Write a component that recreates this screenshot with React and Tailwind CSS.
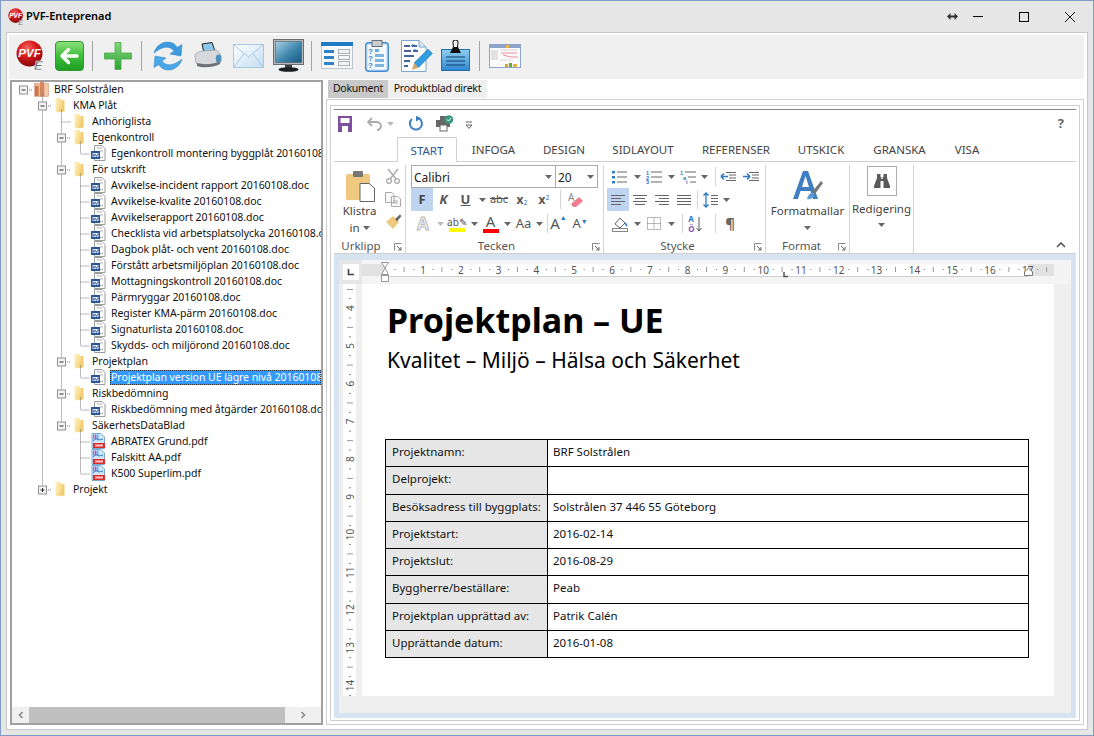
import React from "react";

const Ball = ({ s = 32, id = "b" }) => (
  <svg width={s} height={s} viewBox="0 0 32 32" className="shrink-0">
    <defs>
      <radialGradient id={id} cx="0.42" cy="0.3" r="0.75">
        <stop offset="0" stopColor="#f46a5e" />
        <stop offset="0.45" stopColor="#d81a1e" />
        <stop offset="1" stopColor="#7c0508" />
      </radialGradient>
    </defs>
    <circle cx="13.5" cy="13.5" r="13" fill={`url(#${id})`} />
    <text x="13.5" y="17" textAnchor="middle" fontFamily="'Liberation Sans',sans-serif" fontWeight="700" fontStyle="italic" fontSize="11.5" fill="#fff">PVF</text>
    <text x="18" y="29.5" fontFamily="'Liberation Sans',sans-serif" fontWeight="700" fontStyle="italic" fontSize="13" fill="#6f6f6f" stroke="#fff" strokeWidth="0.4">E</text>
  </svg>
);

const Back = () => (
  <svg width="29" height="30" viewBox="0 0 29 30" className="shrink-0">
    <defs>
      <linearGradient id="gb" x1="0" y1="0" x2="0" y2="1">
        <stop offset="0" stopColor="#8fe07f" />
        <stop offset="0.5" stopColor="#3fbf3a" />
        <stop offset="1" stopColor="#1d9d22" />
      </linearGradient>
    </defs>
    <rect x="0.5" y="0.5" width="28" height="29" rx="3.5" fill="url(#gb)" stroke="#2a9a2b" />
    <path d="M7 15 L13.5 8.5 M7 15 L13.5 21.5 M7 15 H22" stroke="#fff" strokeWidth="3.4" fill="none" strokeLinecap="round" />
  </svg>
);

const Plus = () => (
  <svg width="28" height="28" viewBox="0 0 28 28" className="shrink-0">
    <defs>
      <linearGradient id="gp" x1="0" y1="0" x2="0" y2="1">
        <stop offset="0" stopColor="#86d67e" />
        <stop offset="1" stopColor="#2ea334" />
      </linearGradient>
    </defs>
    <path d="M11 0.5 H17 V11 H27.5 V17 H17 V27.5 H11 V17 H0.5 V11 H11 Z" fill="url(#gp)" stroke="#48ab4a" strokeWidth="0.8" />
  </svg>
);

const Refresh = () => (
  <svg width="30" height="32" viewBox="0 0 30 32" className="shrink-0">
    <path d="M1 13 C3 5 11 0.5 18 2.5 C21 3.5 23 5 24 7.5 L29 4.5 L28 16 L17 14 L21 11 C19 8 15 6.5 11 7.5 C7 8.5 4 10.5 1 13 Z" fill="#3d9be0" stroke="#2a7fc5" strokeWidth="0.5" />
    <path d="M29 19 C27 27 19 31.5 12 29.5 C9 28.5 7 27 6 24.5 L1 27.5 L2 16 L13 18 L9 21 C11 24 15 25.5 19 24.5 C23 23.5 26 21.5 29 19 Z" fill="#4aa8e8" stroke="#2a7fc5" strokeWidth="0.5" />
  </svg>
);

const Printer = () => (
  <svg width="29" height="28" viewBox="0 0 29 28" className="shrink-0">
    <path d="M9 2 L19 0.5 L22 9 L11 11 Z" fill="#8cc8ee" stroke="#222" strokeWidth="1" />
    <path d="M2 14 C2 11 6 9.5 10 9 L22 8 C25 8 27 11 28 14 L28 20 C24 23 8 24 3 21 Z" fill="#d6d8dc" stroke="#8f9298" strokeWidth="0.6" />
    <path d="M4 21 C10 23 21 22.5 27 19 L27 22 C20 26 9 26 4 24 Z" fill="#6e7278" />
    <ellipse cx="25.5" cy="16.5" rx="2.8" ry="4" fill="#4f8fc0" />
  </svg>
);

const Mail = () => (
  <svg width="31" height="24" viewBox="0 0 31 24" className="shrink-0">
    <defs>
      <linearGradient id="gm" x1="0" y1="0" x2="1" y2="1">
        <stop offset="0" stopColor="#ffffff" />
        <stop offset="1" stopColor="#c4ddf2" />
      </linearGradient>
    </defs>
    <rect x="0.5" y="0.5" width="30" height="23" fill="url(#gm)" stroke="#a8c8e4" />
    <path d="M1 1 L15.5 13 L30 1 M1 23 L11 9.5 M30 23 L20 9.5" fill="none" stroke="#a8c8e4" />
  </svg>
);

const Monitor = () => (
  <svg width="31" height="33" viewBox="0 0 31 33" className="shrink-0">
    <defs>
      <linearGradient id="gs" x1="0" y1="0" x2="1" y2="1">
        <stop offset="0" stopColor="#a8cfe4" />
        <stop offset="0.55" stopColor="#3f87ad" />
        <stop offset="1" stopColor="#16597f" />
      </linearGradient>
    </defs>
    <rect x="0.5" y="0.5" width="30" height="25" fill="#b6b9bc" stroke="#6a6e73" />
    <rect x="2.5" y="2.5" width="26" height="21" fill="url(#gs)" stroke="#4a5055" strokeWidth="0.5" />
    <rect x="12" y="26" width="7" height="3" fill="#3a3d40" />
    <ellipse cx="15.5" cy="30.5" rx="10" ry="2.3" fill="#1d1e20" />
  </svg>
);

const ListForm = () => (
  <svg width="32" height="27" viewBox="0 0 32 27" className="shrink-0">
    <rect x="0.5" y="0.5" width="31" height="26" fill="#f7f9fb" stroke="#bcc4cc" />
    <rect x="0" y="0" width="32" height="4" fill="#1f7cc4" />
    <rect x="3" y="8" width="10" height="3" fill="#2b82c7" />
    <rect x="3" y="14" width="10" height="3" fill="#2b82c7" />
    <rect x="3" y="20" width="10" height="3" fill="#2b82c7" />
    <rect x="17.5" y="7.5" width="11" height="4" fill="#f0f2f4" stroke="#a9b0b6" />
    <rect x="17.5" y="13.5" width="11" height="4" fill="#f0f2f4" stroke="#a9b0b6" />
    <rect x="17.5" y="19.5" width="11" height="4" fill="#f0f2f4" stroke="#a9b0b6" />
  </svg>
);

const Clip = () => (
  <svg width="24" height="32" viewBox="0 0 24 32" className="shrink-0">
    <rect x="0.7" y="2.7" width="22.6" height="28.6" rx="3" fill="#d4e6f7" stroke="#3e8ad0" strokeWidth="1.4" />
    <rect x="3" y="5" width="18" height="24" fill="#f5f9fd" />
    <rect x="7" y="0.5" width="10" height="6" fill="#c9ccd0" stroke="#6c7075" />
    <text x="3" y="14" fontFamily="'Liberation Sans',sans-serif" fontWeight="700" fontSize="8" fill="#2e86d0">?</text>
    <text x="3" y="21" fontFamily="'Liberation Sans',sans-serif" fontWeight="700" fontSize="8" fill="#2e86d0">?</text>
    <text x="3" y="28" fontFamily="'Liberation Sans',sans-serif" fontWeight="700" fontSize="8" fill="#2e86d0">?</text>
    <rect x="10" y="9" width="4" height="3" fill="#6ea9da" />
    <rect x="10" y="14" width="9" height="3" fill="#7fb4df" />
    <rect x="10" y="19" width="9" height="3" fill="#7fb4df" />
    <rect x="10" y="24" width="9" height="3" fill="#7fb4df" />
  </svg>
);

const EditDoc = () => (
  <svg width="32" height="32" viewBox="0 0 32 32" className="shrink-0">
    <path d="M0.5 0.5 H18 L25 7 V31.5 H0.5 Z" fill="#fff" stroke="#7aa6cf" />
    <path d="M18 0.5 V7 H25" fill="#d7e6f4" stroke="#7aa6cf" />
    <path d="M3 6 H9 M11 6 H16 M3 11 H10 M12 11 H17 M3 16 H13 M3 21 H9 M3 26 H7" stroke="#0b2f7a" strokeWidth="1.5" />
    <path d="M10 6 L12 4.5 L14 6 M12 11 L14 9.5 L16 11" stroke="#2d72d8" fill="none" />
    <path d="M13 23 L27 9 L31.5 13.5 L17.5 27.5 Z" fill="#2f9de0" stroke="#1d78b8" strokeWidth="0.5" />
    <path d="M13 23 L17.5 27.5 L11 30 Z" fill="#d9a463" />
  </svg>
);

const Clipped = () => (
  <svg width="29" height="32" viewBox="0 0 29 32" className="shrink-0">
    <defs>
      <linearGradient id="gc" x1="0" y1="0" x2="0" y2="1">
        <stop offset="0" stopColor="#8fd0f2" />
        <stop offset="1" stopColor="#2f86cf" />
      </linearGradient>
    </defs>
    <rect x="0.5" y="9.5" width="28" height="21" fill="url(#gc)" stroke="#1f6fb0" />
    <path d="M5 17 H24 M5 21 H24 M5 25 H24" stroke="#12406b" strokeWidth="1.1" />
    <path d="M9 13 L12 7 H17 L20 13 Z" fill="#111" />
    <path d="M12.5 7 L12 2.5 A2.5 2.5 0 0 1 17 2.5 L16.5 7" fill="none" stroke="#222" strokeWidth="1.1" />
  </svg>
);

const Shot = () => (
  <svg width="32" height="24" viewBox="0 0 32 24" className="shrink-0">
    <rect x="0.5" y="0.5" width="31" height="23" fill="#fafafa" stroke="#8ea3c9" />
    <rect x="1" y="1" width="30" height="3" fill="#8ea3c9" />
    <rect x="17" y="1" width="3" height="3" fill="#e6b54a" />
    <rect x="2" y="6" width="7" height="10" fill="#e2e2e2" />
    <path d="M12 9 H28 M14 11 L22 13 H29" stroke="#ee8f9c" strokeWidth="1.2" fill="none" />
    <path d="M11 6 H28 M11 16 H24" stroke="#d8d8d8" />
    <rect x="16" y="20" width="3" height="3" fill="#e0a020" />
    <rect x="20" y="19" width="3" height="4" fill="#6fa830" />
    <rect x="24" y="20" width="4" height="3" fill="#e8b040" />
  </svg>
);

const Sep = ({ ml }) => <div className={`w-px h-[30px] bg-[#a3a3a3] shrink-0 ${ml}`} />;

const Folder = () => (
  <svg width="10" height="16" viewBox="0 0 10 16" className="shrink-0">
    <defs>
      <linearGradient id="gf" x1="0" y1="0" x2="1" y2="0.4">
        <stop offset="0" stopColor="#fff3c4" />
        <stop offset="0.6" stopColor="#f7dc90" />
        <stop offset="1" stopColor="#eec76a" />
      </linearGradient>
    </defs>
    <path d="M0.5 1 H5 L6 3 H9.5 V14.5 L3 15.5 L0.5 14 Z" fill="url(#gf)" />
  </svg>
);

const DocI = () => (
  <svg width="15" height="16" viewBox="0 0 15 16" className="shrink-0">
    <path d="M3.5 0.5 H11 L14 3.5 V15.5 H3.5 Z" fill="#fff" stroke="#9a9a9a" />
    <path d="M6 3 H11 M9 6 H12 M9 12.5 H12" stroke="#b0b0b0" />
    <rect x="0" y="6" width="9" height="8" fill="#2b579a" />
    <rect x="1.5" y="8" width="6" height="4" fill="#e8eef7" />
    <path d="M2 8.5 L3 11.5 L4.3 9 L5.5 11.5 L7 8.5" stroke="#2b579a" strokeWidth="0.8" fill="none" />
  </svg>
);

const PdfI = () => (
  <svg width="15" height="16" viewBox="0 0 15 16" className="shrink-0">
    <path d="M1 0.5 H10 L13.5 4 V15.5 H1 Z" fill="#cfe6f8" stroke="#7ca9cf" />
    <rect x="2" y="1.5" width="1.5" height="5" fill="#d65cc0" />
    <rect x="4" y="1.5" width="1.5" height="5" fill="#6a7be0" />
    <rect x="6" y="1.5" width="1.5" height="5" fill="#58b8e8" />
    <path d="M2 8 L5 5.5 L8 7 L12 6" stroke="#3a7fc0" fill="none" />
    <rect x="2" y="10" width="12" height="5" fill="#e02b2b" />
    <rect x="4" y="11.5" width="8" height="2" fill="#f4c8c8" />
  </svg>
);

const BrfI = () => (
  <svg width="15" height="16" viewBox="0 0 15 16" className="shrink-0">
    <rect x="0.5" y="2.5" width="14" height="13" fill="#e9b79a" stroke="#c98f70" strokeWidth="0.5" />
    <rect x="1" y="5" width="3.5" height="10" fill="#c9764a" />
    <rect x="6" y="0.5" width="4" height="15" fill="#d9865a" />
    <rect x="11" y="3" width="3" height="12" fill="#f0caa9" />
  </svg>
);

const treeRows = [
  [54, "brf", "BRF Solstrålen"],
  [73, "f", "KMA Plåt"],
  [92, "f", "Anhöriglista"],
  [92, "f", "Egenkontroll"],
  [111, "d", "Egenkontroll montering byggplåt 20160108.doc"],
  [92, "f", "För utskrift"],
  [111, "d", "Avvikelse-incident rapport 20160108.doc"],
  [111, "d", "Avvikelse-kvalite 20160108.doc"],
  [111, "d", "Avvikelserapport 20160108.doc"],
  [111, "d", "Checklista vid arbetsplatsolycka 20160108.doc"],
  [111, "d", "Dagbok plåt- och vent 20160108.doc"],
  [111, "d", "Förstått arbetsmiljöplan 20160108.doc"],
  [111, "d", "Mottagningskontroll 20160108.doc"],
  [111, "d", "Pärmryggar 20160108.doc"],
  [111, "d", "Register KMA-pärm 20160108.doc"],
  [111, "d", "Signaturlista 20160108.doc"],
  [111, "d", "Skydds- och miljörond 20160108.doc"],
  [92, "f", "Projektplan"],
  [111, "d", "Projektplan version UE lägre nivå 20160108.doc", true],
  [92, "f", "Riskbedömning"],
  [111, "d", "Riskbedömning med åtgärder 20160108.doc"],
  [92, "f", "SäkerhetsDataBlad"],
  [111, "p", "ABRATEX Grund.pdf"],
  [111, "p", "Falskitt AA.pdf"],
  [111, "p", "K500 Superlim.pdf"],
  [73, "f", "Projekt"],
];

const rowY = (n) => 7.5 + 16 * n;

const Exp = ({ x, y, plus }) => (
  <g>
    <rect x={x - 4} y={y - 4} width="8" height="8" fill="#f4f4f4" stroke="#8f8f8f" />
    <path d={`M${x - 2} ${y} H${x + 2}`} stroke="#333" />
    {plus && <path d={`M${x} ${y - 2} V${y + 2}`} stroke="#333" />}
  </g>
);

const TreeLines = () => {
  const hs = [
    [61.5, 71, 2], [65, 71, 3], [80.5, 90, 4], [65, 71, 5],
    ...[6, 7, 8, 9, 10, 11, 12, 13, 14, 15, 16].map((n) => [80.5, 90, n]),
    [65, 71, 17], [80.5, 90, 18], [65, 71, 19], [80.5, 90, 20], [65, 71, 21],
    [80.5, 90, 22], [80.5, 90, 23], [80.5, 90, 24], [46, 52, 25],
  ];
  return (
    <svg className="absolute left-0 top-0 pointer-events-none" width="100" height="500">
      <g stroke="#777" strokeDasharray="1 1" fill="none">
        <path d={`M30.5 ${rowY(0) + 4} V${rowY(1)}`} />
        <path d={`M30.5 ${rowY(1)} V${rowY(25) - 4}`} />
        <path d={`M49.5 ${rowY(1) + 4} V${rowY(21) - 4}`} />
        <path d={`M68.5 ${rowY(3) + 4} V${rowY(4)}`} />
        <path d={`M68.5 ${rowY(5) + 4} V${rowY(16)}`} />
        <path d={`M68.5 ${rowY(17) + 4} V${rowY(18)}`} />
        <path d={`M68.5 ${rowY(19) + 4} V${rowY(20)}`} />
        <path d={`M68.5 ${rowY(21) + 4} V${rowY(24)}`} />
        <path d={`M15 ${rowY(0) + 0.5} H21`} />
        <path d={`M34 ${rowY(1) + 0.5} H40`} />
        {hs.map(([a, b, n], i) => (
          <path key={i} d={`M${a - 12} ${rowY(n) + 0.5} H${b - 12}`} />
        ))}
      </g>
      <Exp x={11.5} y={rowY(0) + 0.5} />
      <Exp x={30.5} y={rowY(1) + 0.5} />
      <Exp x={49.5} y={rowY(3) + 0.5} />
      <Exp x={49.5} y={rowY(5) + 0.5} />
      <Exp x={49.5} y={rowY(17) + 0.5} />
      <Exp x={49.5} y={rowY(19) + 0.5} />
      <Exp x={49.5} y={rowY(21) + 0.5} />
      <Exp x={30.5} y={rowY(25) + 0.5} plus />
    </svg>
  );
};

const Tree = () => (
  <div className="w-[313px] h-[645px] border-2 border-[#a0a0a0] bg-white flex flex-col shrink-0 font-['Noto_Sans',sans-serif] text-[10.5px] tracking-[-0.05px] text-[#111]">
    <div className="relative flex-1 overflow-hidden">
      <TreeLines />
      <div className="-mt-[1px]">
        {treeRows.map(([tx, k, t, sel], i) => {
          const icx = k === "f" ? tx - 18 : tx - 20;
          return (
            <div key={i} className="h-[16px] flex items-center whitespace-nowrap" style={{ paddingLeft: icx - 12 }}>
              {k === "f" && <Folder />}
              {k === "d" && <DocI />}
              {k === "p" && <PdfI />}
              {k === "brf" && <BrfI />}
              <span
                className={`block leading-[15px] ${sel ? "bg-[#3399ff] text-white outline-1 outline-dotted outline-[#333] -outline-offset-1 pl-px pr-4 flex-1 overflow-hidden" : ""}`}
                style={{ marginLeft: k === "f" ? 8 : sel ? 4 : 5 }}
              >
                {t}
              </span>
            </div>
          );
        })}
      </div>
    </div>
    <div className="h-[16px] bg-[#f0f0f0] flex items-center shrink-0">
      <div className="w-[17px] flex justify-center">
        <svg width="6" height="8" viewBox="0 0 6 8"><path d="M4.5 1 L1.5 4 L4.5 7" stroke="#888" strokeWidth="1.6" fill="none" /></svg>
      </div>
      <div className="w-[256px] h-[16px] bg-[#c0c0c0]" />
      <div className="flex-1 flex justify-center">
        <svg width="6" height="8" viewBox="0 0 6 8"><path d="M1.5 1 L4.5 4 L1.5 7" stroke="#888" strokeWidth="1.6" fill="none" /></svg>
      </div>
    </div>
  </div>
);

const Caret = ({ c = "#666" }) => (
  <svg width="7" height="4" viewBox="0 0 7 4" className="shrink-0"><path d="M0 0 H7 L3.5 4 Z" fill={c} /></svg>
);

const Cell = ({ w, bg, children }) => (
  <div className={`h-full flex items-center justify-center shrink-0 ${bg || ""}`} style={{ width: w }}>{children}</div>
);

const Lines = ({ d, w = 16, h = 12, c = "#666" }) => (
  <svg width={w} height={h} viewBox={`0 0 ${w} ${h}`} className="shrink-0"><path d={d} stroke={c} fill="none" /></svg>
);

const VSep = () => <div className="w-px h-[19px] bg-[#d5d5d5] shrink-0 self-center" />;

const Launcher = () => (
  <svg width="8" height="8" viewBox="0 0 8 8" className="absolute right-[3px] top-[6px]">
    <path d="M0.5 7.5 V0.5 H7.5" stroke="#8a8a8a" fill="none" />
    <path d="M3 3 L7 7 M7 4 V7 H4" stroke="#666" fill="none" />
  </svg>
);

const GroupLabel = ({ children, launcher, pr }) => (
  <div className={`relative h-[16px] leading-[18px] text-center text-[#555] text-[11.5px] ${pr || ""}`}>
    {children}
    {launcher && <Launcher />}
  </div>
);

const Urklipp = () => (
  <div className="w-[72px] h-[88px] flex flex-col border-r border-[#d5d5d5] shrink-0">
    <div className="flex-1 flex">
      <div className="w-[49px] flex flex-col items-center">
        <svg width="30" height="32" viewBox="0 0 30 32" className="mt-[5px] ml-[5px] shrink-0">
          <rect x="0" y="4" width="24" height="26" rx="1.5" fill="#efc97f" />
          <rect x="7" y="1" width="10" height="6" rx="1" fill="#777" />
          <path d="M14 13.5 H23 L28.5 18 V31.5 H14 Z" fill="#fff" stroke="#666" />
        </svg>
        <div className="mt-[1px] ml-[2px] leading-[16px] text-[#444] text-[11.5px] text-center">Klistra</div>
        <div className="mt-[1px] ml-[2px] flex items-center gap-[3px] leading-[16px] text-[#444] text-[11.5px]">in <Caret /></div>
      </div>
      <div className="flex flex-col items-center w-[20px]">
        <svg width="16" height="16" viewBox="0 0 16 16" className="mt-[3px] shrink-0">
          <path d="M3 1 L11 11 M13 1 L5 11" stroke="#aaa" strokeWidth="1.4" />
          <circle cx="4" cy="13" r="2.4" fill="none" stroke="#aaa" strokeWidth="1.3" />
          <circle cx="12" cy="13" r="2.4" fill="none" stroke="#aaa" strokeWidth="1.3" />
        </svg>
        <svg width="16" height="15" viewBox="0 0 16 15" className="mt-[8px] shrink-0">
          <path d="M0.5 0.5 H7 L9 2.5 V10.5 H0.5 Z M6.5 4.5 H13 L15.5 7 V14.5 H6.5 Z" fill="#f8f8f8" stroke="#aaa" />
          <path d="M8 9 H13 M8 11 H13" stroke="#aaa" />
        </svg>
        <svg width="17" height="16" viewBox="0 0 17 16" className="mt-[7px] shrink-0">
          <path d="M1 8 L8 2 L14 8 L8 15 Z" fill="#efc97f" />
          <path d="M10 5 L15 0.5 L16.5 2 L12 7.5 Z" fill="#666" />
        </svg>
      </div>
    </div>
    <GroupLabel launcher pr="pr-[17px]">Urklipp</GroupLabel>
  </div>
);

const AIcon = ({ bar, c = "#555" }) => (
  <div className="flex flex-col items-center leading-none">
    <span className="text-[15px] leading-[13px]" style={{ color: c }}>A</span>
    {bar && <span className="w-[16px] h-[4px] mt-[1px]" style={{ background: bar }} />}
  </div>
);

const Combo = ({ w, t }) => (
  <div className="h-[23px] flex items-center justify-between pl-[2px] pr-[3px] bg-white border border-[#ababab] -mr-px" style={{ width: w }}>
    <span className="text-[#222] text-[12px] leading-[15px] pt-[1px]">{t}</span>
    <Caret />
  </div>
);

const Tecken = () => (
  <div className="w-[198px] h-[88px] flex flex-col border-r border-[#d5d5d5] shrink-0">
    <div className="flex-1 pl-[5px]">
      <div className="flex"><Combo w={145} t="Calibri" /><Combo w={43} t="20" /></div>
      <div className="flex h-[23px] items-center">
        <Cell w={22} bg="bg-[#bfd4f0]"><span className="font-bold text-[13px] text-[#444]">F</span></Cell>
        <Cell w={21}><span className="font-bold italic text-[13px] text-[#555]">K</span></Cell>
        <Cell w={23}><span className="font-bold underline text-[13px] text-[#555]">U</span></Cell>
        <Cell w={10}><Caret /></Cell>
        <Cell w={24}><span className="line-through text-[11px] text-[#555]">abc</span></Cell>
        <Cell w={22}><span className="font-bold text-[12px] text-[#555]">x<sub className="text-[7px] text-[#2b79c2] font-normal">2</sub></span></Cell>
        <Cell w={22}><span className="font-bold text-[12px] text-[#555]">x<sup className="text-[7px] text-[#2b79c2] font-normal">2</sup></span></Cell>
        <Cell w={5} />
        <VSep />
        <Cell w={30}>
          <svg width="16" height="16" viewBox="0 0 16 16">
            <path d="M3 12 L11 5 L15 9 L8 15 H5 Z" fill="#f07d8e" />
            <text x="0" y="9" fontSize="10" fill="#888" fontFamily="'Noto Sans',sans-serif">A</text>
          </svg>
        </Cell>
      </div>
      <div className="flex h-[25px] items-center">
        <Cell w={24}><span className="text-[17px] font-bold text-[#f0f0f0] [-webkit-text-stroke:1px_#bdbdbd]">A</span></Cell>
        <Cell w={10}><Caret c="#bbb" /></Cell>
        <Cell w={24}>
          <div className="flex flex-col items-center">
            <span className="text-[10px] leading-[12px] text-[#555]">ab✎</span>
            <span className="w-[16px] h-[4px] bg-[#ffff00]" />
          </div>
        </Cell>
        <Cell w={10}><Caret /></Cell>
        <Cell w={23}><AIcon bar="#ff0000" /></Cell>
        <Cell w={10}><Caret /></Cell>
        <Cell w={23}><span className="text-[13px] text-[#555]">Aa</span></Cell>
        <Cell w={8}><Caret /></Cell>
        <Cell w={4} />
        <VSep />
        <Cell w={21}><span className="text-[15px] text-[#555]">A<sup className="text-[7px] text-[#2b79c2] align-super">▲</sup></span></Cell>
        <Cell w={22}><span className="text-[13px] text-[#555]">A<sup className="text-[7px] text-[#2b79c2]">▼</sup></span></Cell>
      </div>
    </div>
    <GroupLabel launcher pr="pr-[16px]">Tecken</GroupLabel>
  </div>
);

const bl = "#2b79c2";
const BulletIcon = () => (
  <svg width="15" height="14" viewBox="0 0 15 14" className="shrink-0">
    <rect x="0" y="1" width="3" height="2.4" fill={bl} /><rect x="0" y="6" width="3" height="2.4" fill={bl} /><rect x="0" y="11" width="3" height="2.4" fill={bl} />
    <path d="M5 2 H15 M5 7 H15 M5 12 H15" stroke="#666" />
  </svg>
);
const NumIcon = ({ multi }) => (
  <svg width="16" height="14" viewBox="0 0 16 14" className="shrink-0">
    <text x="0" y="4.5" fontSize="5.5" fontWeight="700" fill={bl} fontFamily="'Liberation Sans',sans-serif">1</text>
    <text x={multi ? 3 : 0} y="9.5" fontSize="5.5" fontWeight="700" fill={bl} fontFamily="'Liberation Sans',sans-serif">{multi ? "a" : "2"}</text>
    <text x={multi ? 6 : 0} y="14" fontSize="5.5" fontWeight="700" fill={bl} fontFamily="'Liberation Sans',sans-serif">{multi ? "i" : "3"}</text>
    <path d={multi ? "M5 2 H16 M8 7 H16 M10 12 H16" : "M5 2 H16 M5 7 H16 M5 12 H16"} stroke="#666" />
  </svg>
);

const Stycke = () => (
  <div className="w-[162px] h-[88px] flex flex-col border-r border-[#d5d5d5] shrink-0">
    <div className="flex-1 pl-[3px]">
      <div className="flex h-[23px] items-center">
        <Cell w={25}><BulletIcon /></Cell>
        <Cell w={10}><Caret /></Cell>
        <Cell w={24}><NumIcon /></Cell>
        <Cell w={10}><Caret /></Cell>
        <Cell w={24}><NumIcon multi /></Cell>
        <Cell w={9}><Caret /></Cell>
        <Cell w={6} />
        <VSep />
        <Cell w={24}>
          <svg width="16" height="11" viewBox="0 0 16 11"><path d="M6 1.5 H16 M9 4 H16 M9 7 H16 M6 9.5 H16" stroke="#666" /><path d="M8 5.5 H1 M1 5.5 L4 2.5 M1 5.5 L4 8.5" stroke={bl} strokeWidth="1.6" fill="none" /></svg>
        </Cell>
        <Cell w={22}>
          <svg width="16" height="11" viewBox="0 0 16 11"><path d="M6 1.5 H16 M9 4 H16 M9 7 H16 M6 9.5 H16" stroke="#666" /><path d="M0 5.5 H7 M7 5.5 L4 2.5 M7 5.5 L4 8.5" stroke={bl} strokeWidth="1.6" fill="none" /></svg>
        </Cell>
      </div>
      <div className="flex h-[23px] items-center">
        <Cell w={22} bg="bg-[#bfd4f0]"><Lines d="M1 1.5 H15 M1 4.5 H11 M1 7.5 H15 M1 10.5 H11" /></Cell>
        <Cell w={22}><Lines d="M1 1.5 H15 M3 4.5 H13 M1 7.5 H15 M3 10.5 H13" /></Cell>
        <Cell w={22}><Lines d="M1 1.5 H15 M5 4.5 H15 M1 7.5 H15 M5 10.5 H15" /></Cell>
        <Cell w={22}><Lines d="M1 1.5 H15 M1 4.5 H15 M1 7.5 H15 M1 10.5 H15" /></Cell>
        <Cell w={2} />
        <VSep />
        <Cell w={24}>
          <svg width="15" height="16" viewBox="0 0 15 16"><path d="M3 1 V15 M0.5 3.5 L3 1 L5.5 3.5 M0.5 12.5 L3 15 L5.5 12.5" stroke={bl} strokeWidth="1.3" fill="none" /><path d="M8 3.5 H15 M8 6.5 H15 M8 9.5 H15 M8 12.5 H15" stroke="#666" /></svg>
        </Cell>
        <Cell w={8}><Caret /></Cell>
      </div>
      <div className="flex h-[25px] items-center">
        <Cell w={25}>
          <svg width="16" height="16" viewBox="0 0 16 16"><path d="M3 8 L8 2 L13 7 L8 12 Z" fill="#fff" stroke="#666" /><path d="M13 7 L15 10" stroke={bl} strokeWidth="1.5" /><rect x="0.5" y="12.5" width="15" height="3" fill="#fff" stroke="#888" /></svg>
        </Cell>
        <Cell w={10}><Caret /></Cell>
        <Cell w={24}>
          <svg width="14" height="13" viewBox="0 0 14 13"><path d="M0.5 0.5 H13.5 V12.5 H0.5 Z M7 0.5 V12.5 M0.5 6.5 H13.5" stroke="#777" strokeDasharray="1 1" fill="none" /></svg>
        </Cell>
        <Cell w={10}><Caret /></Cell>
        <Cell w={6} />
        <VSep />
        <Cell w={24}>
          <div className="flex items-center gap-[1px]">
            <div className="flex flex-col leading-[10px] text-[8px] font-bold"><span className="text-[#2b79c2]">A</span><span className="text-[#8a55b5]">Ö</span></div>
            <svg width="6" height="16" viewBox="0 0 6 16"><path d="M3 1 V15 M0.5 12 L3 15 L5.5 12" stroke="#555" fill="none" /></svg>
          </div>
        </Cell>
        <Cell w={8} />
        <VSep />
        <Cell w={28}><span className="text-[15px] font-bold text-[#666]">¶</span></Cell>
      </div>
    </div>
    <GroupLabel launcher pr="pr-[14px]">Stycke</GroupLabel>
  </div>
);

const Format = () => (
  <div className="w-[84px] h-[88px] flex flex-col border-r border-[#d5d5d5] shrink-0">
    <div className="flex-1 flex flex-col items-center">
      <svg width="30" height="31" viewBox="0 0 30 31" className="mt-[5px] ml-[1px] shrink-0">
        <path d="M0 29 L10 1 H15 L25 29 H20 L17.5 21 H7.5 L5 29 Z M9 17 H16 L12.5 6 Z" fill="#3f7fc1" fillRule="evenodd" />
        <path d="M19 22 L28 11 L30 13 L22 24 Z" fill="#777" />
        <path d="M14 29 C15 24 18 22 21 23 C22 27 18 30 14 29 Z" fill="#5a9ad6" />
      </svg>
      <div className="mt-[2px] leading-[16px] text-[#444] text-[11.5px]">Formatmallar</div>
      <div className="mt-[7px]"><Caret /></div>
    </div>
    <GroupLabel launcher pr="pr-[12px]">Format</GroupLabel>
  </div>
);

const Redigering = () => (
  <div className="w-[64px] h-[88px] flex flex-col border-r border-[#d5d5d5] shrink-0 items-center">
    <div className="w-[30px] h-[30px] mt-[1px] border border-[#ababab] flex items-center justify-center">
      <svg width="16" height="14" viewBox="0 0 16 14">
        <path d="M3 0 H6.5 V3 H7.3 V5 H8.7 V3 H9.5 V0 H13 V4 L16 12 V14 H9.5 V7 H6.5 V14 H0 V12 L3 4 Z" fill="#5a5a5a" />
      </svg>
    </div>
    <div className="mt-[5px] leading-[16px] text-[#444] text-[11.5px]">Redigering</div>
    <div className="mt-[6px]"><Caret /></div>
  </div>
);

const tabsDef = [
  ["INFOGA", 73], ["DESIGN", 68], ["SIDLAYOUT", 90], ["REFERENSER", 96], ["UTSKICK", 74], ["GRANSKA", 83], ["VISA", 52],
];

const Qat = () => (
  <div className="h-[27px] flex items-center shrink-0 relative pl-[4px]">
    <svg width="14" height="16" viewBox="0 0 14 16" className="shrink-0">
      <path d="M0 0 H14 V16 H0 Z" fill="#7d4f9e" />
      <rect x="2.5" y="2" width="9" height="5" fill="#fff" />
      <rect x="4" y="10" width="6" height="6" fill="#fff" />
    </svg>
    <svg width="15" height="14" viewBox="0 0 15 14" className="ml-[15px] shrink-0">
      <path d="M5 1 L1 5 L5 9 M1 5 H9 C12 5 14 7 14 9 C14 11 12 13 10 13" stroke="#aaa" strokeWidth="1.8" fill="none" />
    </svg>
    <div className="ml-[5px]"><Caret c="#bbb" /></div>
    <svg width="15" height="15" viewBox="0 0 15 15" className="ml-[14px] shrink-0">
      <path d="M4 3 A6 6 0 1 0 10.5 2.2" stroke="#3f7fc1" strokeWidth="2" fill="none" />
      <path d="M9 0 L9 6 L14 3 Z" fill="#3f7fc1" transform="translate(-1 -0.5)" />
    </svg>
    <svg width="18" height="17" viewBox="0 0 18 17" className="ml-[13px] shrink-0">
      <rect x="4" y="1" width="7" height="4" fill="#666" />
      <rect x="0" y="5" width="14" height="7" fill="#666" />
      <rect x="4" y="10" width="7" height="6" fill="#fff" stroke="#666" />
      <circle cx="13" cy="4.5" r="4.3" fill="#3a9a86" />
      <path d="M11 4.5 L12.5 6 L15 3" stroke="#fff" fill="none" />
    </svg>
    <svg width="6" height="8" viewBox="0 0 6 8" className="ml-[12px] mt-[2px] shrink-0">
      <path d="M0 1 H6 M0 4 H6 L3 7.5 L0 4" stroke="#666" fill="none" />
    </svg>
    <div className="ml-auto mr-[12px] font-bold text-[13px] text-[#666]">?</div>
  </div>
);

const HRuler = () => {
  const ticks = [];
  const o = 23.2, st = 37.8;
  for (let i = -1; i < 18; i++) {
    const x = o + st * i;
    if (x < 0 || x > 692) continue;
    if (i > 0) ticks.push(<text key={"n" + i} x={x} y="14" textAnchor="middle" fontSize="10" fill="#555" fontFamily="'Noto Sans',sans-serif">{i}</text>);
    ticks.push(<path key={"h" + i} d={`M${x + st / 2} 7 V12`} stroke="#999" />);
    ticks.push(<path key={"a" + i} d={`M${x + st / 4} 9.5 H${x + st / 4 + 1}`} stroke="#777" />);
    ticks.push(<path key={"b" + i} d={`M${x + (3 * st) / 4} 9.5 H${x + (3 * st) / 4 + 1}`} stroke="#777" />);
  }
  return (
    <svg width="692" height="24" viewBox="0 0 692 24" className="shrink-0">
      <rect x="0" y="4" width="692" height="12" fill="#e2e2e2" />
      <rect x="23" y="4" width="643" height="12" fill="#fff" />
      <path d="M23 16.5 H666" stroke="#d0d0d0" />
      {ticks}
      <path d="M422 12 V16.5 H426" stroke="#555" strokeWidth="1.5" fill="none" />
      <path d="M19.5 2.5 H26.5 L23 8 L26.5 14.5 H19.5 L23 8 Z" fill="#fff" stroke="#999" />
      <rect x="19.5" y="15.5" width="7" height="6" fill="#fff" stroke="#999" />
      <path d="M662.5 15.5 V12 L666.5 8 L670.5 12 V15.5 Z" fill="#fff" stroke="#777" />
    </svg>
  );
};

const VRuler = () => {
  const ticks = [];
  const o = 24, st = 37.75;
  for (let i = 0; i < 11; i++) {
    const y = o + st * i;
    ticks.push(<text key={"n" + i} x="10.5" y={y} textAnchor="middle" dominantBaseline="central" fontSize="10" fill="#555" fontFamily="'Noto Sans',sans-serif" transform={`rotate(-90 10.5 ${y})`}>{i + 4}</text>);
    ticks.push(<path key={"h" + i} d={`M8 ${y + st / 2 + 0.5} H14`} stroke="#999" />);
    ticks.push(<path key={"a" + i} d={`M10 ${y + st / 4 + 0.5} H12`} stroke="#888" />);
    ticks.push(<path key={"b" + i} d={`M10 ${y + (3 * st) / 4 + 0.5} H12`} stroke="#888" />);
  }
  return (
    <svg width="23" height="412" viewBox="0 0 23 412" className="shrink-0">
      <rect x="4" y="0" width="13" height="412" fill="#fff" />
      {ticks}
      <path d="M8 5.5 H14 M10 14.5 H12" stroke="#999" />
    </svg>
  );
};

const tableRows = [
  ["Projektnamn:", "BRF Solstrålen"],
  ["Delprojekt:", ""],
  ["Besöksadress till byggplats:", "Solstrålen 37 446 55 Göteborg"],
  ["Projektstart:", "2016-02-14"],
  ["Projektslut:", "2016-08-29"],
  ["Byggherre/beställare:", "Peab"],
  ["Projektplan upprättad av:", "Patrik Calén"],
  ["Upprättande datum:", "2016-01-08"],
];

const Page = () => (
  <div className="w-[692px] h-[412px] bg-white shrink-0 pl-[25px] overflow-hidden font-['Noto_Sans',sans-serif] text-black">
    <div className="text-[34px] font-bold leading-[48px] mt-[12px] whitespace-nowrap">Projektplan – UE</div>
    <div className="text-[21px] leading-[28px] mt-[2px] whitespace-nowrap">Kvalitet – Miljö – Hälsa och Säkerhet</div>
    <table className="-ml-[2px] mt-[65px] w-[644px] border-collapse text-[11.5px] text-[#111] table-fixed">
      <tbody>
        {tableRows.map(([a, b]) => (
          <tr key={a} className="h-[27.25px]">
            <td className="w-[162px] border border-black bg-[#e6e6e6] pl-[6px] pb-[3px] whitespace-nowrap">{a}</td>
            <td className="border border-black pl-[5px] pb-[3px]">{b}</td>
          </tr>
        ))}
      </tbody>
    </table>
  </div>
);

const Word = () => (
  <div className="w-[742px] h-[609px] border-t border-[#8a8a8a] bg-white flex flex-col font-['Noto_Sans',sans-serif] shrink-0">
    <Qat />
    <div className="h-[25px] flex border-b border-[#d0d0d0] pl-[63px] shrink-0 text-[11.5px] text-[#444]">
      <div className="w-[60px] h-[25px] pt-[1px] bg-white border border-[#d0d0d0] border-b-0 flex items-center justify-center text-[#2b579a]">START</div>
      {tabsDef.map(([t, w]) => (
        <div key={t} className="flex items-center justify-center pt-[1px]" style={{ width: w }}>{t}</div>
      ))}
    </div>
    <div className="h-[92px] flex items-start pt-[3px] border-b border-[#d0d0d0] relative shrink-0">
      <Urklipp />
      <Tecken />
      <Stycke />
      <Format />
      <Redigering />
      <svg width="10" height="6" viewBox="0 0 10 6" className="absolute right-[10px] bottom-[5px]">
        <path d="M1 5 L5 1 L9 5" stroke="#555" strokeWidth="1.6" fill="none" />
      </svg>
    </div>
    <div className="flex-1 bg-[#d6e3f1] pl-[5px] pr-[5px] pt-[6px] pb-[5px] min-h-0">
      <div className="h-full bg-[#efefef] flex flex-col">
        <div className="h-[24px] flex shrink-0 bg-[#f4f4f4]">
          <div className="w-[23px] h-[24px] bg-[#e6e6e6] flex items-start justify-center shrink-0">
            <div className="w-[16px] h-[16px] mt-[4px] bg-white flex items-center justify-center">
              <svg width="8" height="8" viewBox="0 0 8 8"><path d="M1.5 1 V6.5 H7" stroke="#444" strokeWidth="1.6" fill="none" /></svg>
            </div>
          </div>
          <HRuler />
        </div>
        <div className="flex shrink-0">
          <VRuler />
          <Page />
        </div>
      </div>
    </div>
  </div>
);

const RightPanel = () => (
  <div className="w-[758px] h-[645px] ml-[3px] shrink-0 flex flex-col font-['Noto_Sans',sans-serif]">
    <div className="flex h-[19px] pl-[2px] text-[10.5px] tracking-[-0.25px] text-[#111] shrink-0 whitespace-nowrap">
      <div className="w-[60px] h-[18px] bg-[#c9c9c9] flex items-center justify-center">Dokument</div>
      <div className="w-[99px] h-[18px] bg-[#efefef] flex items-center justify-center">Produktblad direkt</div>
    </div>
    <div className="flex-1 border border-[#cfcfcf] p-[3px] pt-[5px] min-h-0">
      <div className="h-full border border-[#cfcfcf] p-[3px]">
        <Word />
      </div>
    </div>
  </div>
);

export default function App() {
  return (
    <div className="w-[1094px] h-[736px] bg-[#e6e6e6] border border-[#7f9cc7] flex flex-col overflow-hidden font-['Noto_Sans',sans-serif]">
      <div className="h-[31px] flex items-center relative shrink-0 pl-[7px]">
        <Ball s={18} id="b2" />
        <span className="text-[11px] font-semibold text-black">PVF-Enteprenad</span>
        <div className="ml-auto flex items-center h-full">
          <svg width="11" height="7" viewBox="0 0 11 7" className="mr-[15px]"><path d="M3 3.5 H8" stroke="#333" strokeWidth="2" /><path d="M0 3.5 L3.5 0 V7 Z M11 3.5 L7.5 0 V7 Z" fill="#333" /></svg>
          <div className="w-[10px] h-px bg-black mr-[36px]" />
          <div className="w-[10px] h-[10px] border border-black mr-[36px]" />
          <svg width="10" height="10" viewBox="0 0 10 10" className="mr-[18px]"><path d="M0 0 L10 10 M10 0 L0 10" stroke="#111" strokeWidth="1" /></svg>
        </div>
      </div>
      <div className="ml-[5px] w-[1082px] h-[698px] border border-[#c9c9c9] bg-white pl-[2px] pt-[2px] shrink-0">
        <div className="w-[1075px] h-[44px] bg-[#f0f0f0] flex items-center pl-[7px] pb-[3px]">
          <Ball id="b1" />
          <div className="ml-[7px]"><Back /></div>
          <Sep ml="ml-[8px]" />
          <div className="ml-[11px]"><Plus /></div>
          <Sep ml="ml-[9px]" />
          <div className="ml-[11px]"><Refresh /></div>
          <div className="ml-[10px]"><Printer /></div>
          <div className="ml-[11px]"><Mail /></div>
          <div className="ml-[9px]"><Monitor /></div>
          <Sep ml="ml-[7px]" />
          <div className="ml-[9px]"><ListForm /></div>
          <div className="ml-[12px]"><Clip /></div>
          <div className="ml-[12px]"><EditDoc /></div>
          <div className="ml-[8px]"><Clipped /></div>
          <Sep ml="ml-[9px]" />
          <div className="ml-[9px]"><Shot /></div>
        </div>
        <div className="flex pl-[1px] pt-[1px]">
          <Tree />
          <RightPanel />
        </div>
      </div>
    </div>
  );
}
